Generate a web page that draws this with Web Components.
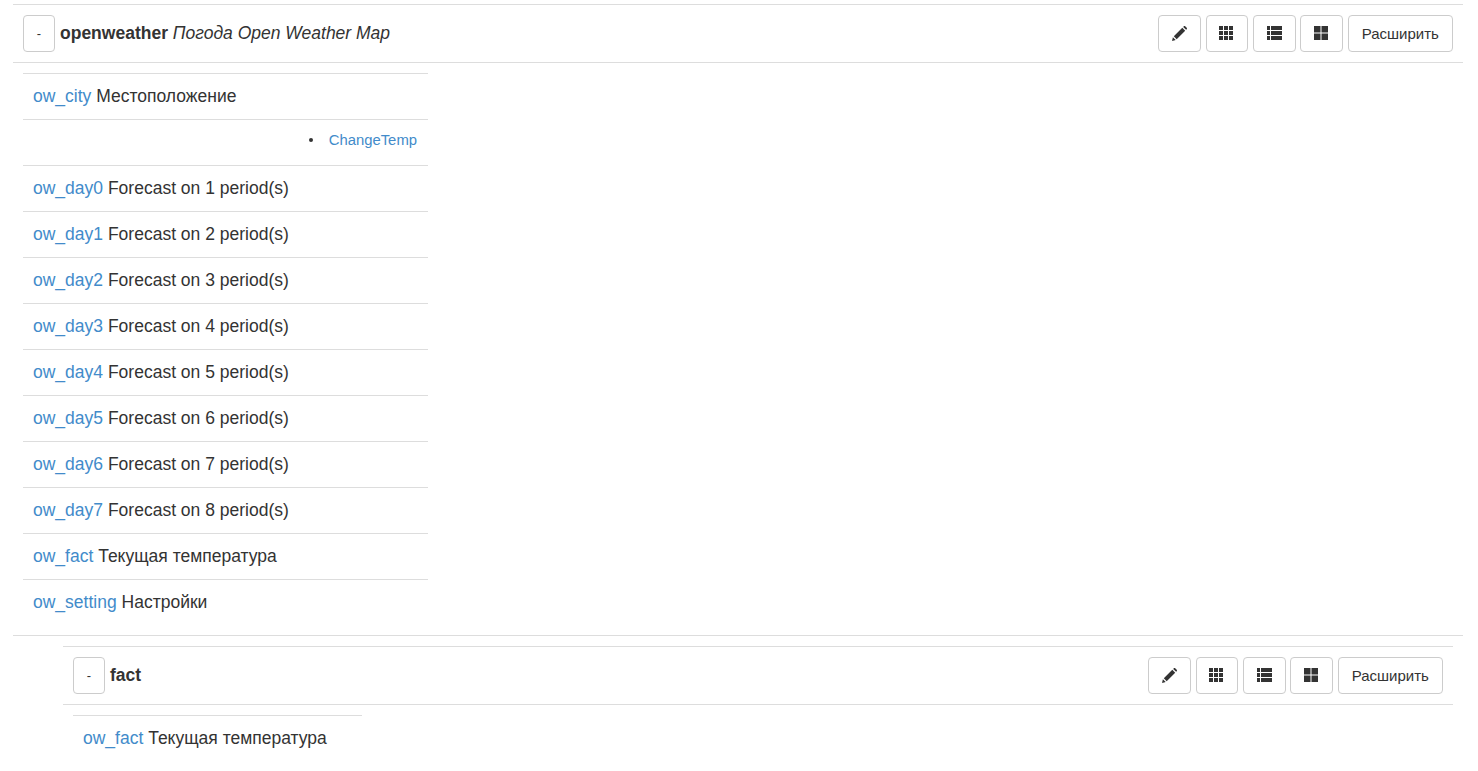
<!DOCTYPE html>
<html><head><meta charset="utf-8"><style>
html,body{margin:0;padding:0;background:#fff}
body{font-family:"Liberation Sans",Arial,sans-serif;font-size:17.5px;line-height:23px;color:#333;padding:4px 15px 0 13px}
</style></head><body>
<template id="tb"><style>
:host{display:inline-flex;align-items:center;justify-content:center;box-sizing:border-box;height:37px;border:1px solid #ccc;border-radius:4px;background:#fff;color:#333;font-size:15px;line-height:20px;flex:none}
</style><slot></slot></template>
<template id="hd"><style>
:host{display:flex;align-items:center;height:57px;border-top:1px solid #ddd;border-bottom:1px solid #ddd;padding:0 10px}
.t{margin-left:5px;font-size:17.5px;line-height:20px;white-space:nowrap;position:relative;top:-1px;flex:1}
.a{display:flex;gap:4.6px;padding-left:.4px}
b{font-weight:700}i{font-style:italic}
svg{display:block;fill:#333;margin:0 2px 1px 0}
svg.n{margin-right:0}
</style><x-btn style="width:32px;font-size:13px">-</x-btn>
<div class="t"><b id="n"></b> <i id="d"></i></div>
<div class="a">
<x-btn style="width:42.7px"><svg class="n" width="15" height="15" viewBox="0 0 15 15"><path d="M0 15 .9 11.300 3.700 14.100ZM1.800 10.300 10.300 1.800 13.200 4.700 4.700 13.200ZM11.200 .9 11.800.3C12.200-.1 12.800-.1 13.200.3L14.700 1.800C15.100 2.200 15.100 2.800 14.700 3.200L14.100 3.800Z"/></svg></x-btn>
<x-btn style="width:42.7px"><svg width="14" height="14" viewBox="0 0 14 14"><path d="M0 0h4v4H0ZM5 0h4v4H5ZM10 0h4v4h-4ZM0 5h4v4H0ZM5 5h4v4H5ZM10 5h4v4h-4ZM0 10h4v4H0ZM5 10h4v4H5ZM10 10h4v4h-4Z"/></svg></x-btn>
<x-btn style="width:42.7px"><svg class="n" width="15" height="14" viewBox="0 0 15 14"><path d="M0 0h3v4H0ZM4 0h11v4H4ZM0 5h3v4H0ZM4 5h11v4H4ZM0 10h3v4H0ZM4 10h11v4H4Z"/></svg></x-btn>
<x-btn style="width:42.7px"><svg width="14" height="14" viewBox="0 0 14 14"><path d="M0 0h6.500v6.500H0ZM7.500 0H14v6.500H7.500ZM0 7.500h6.500V14H0ZM7.500 7.500H14V14H7.500Z"/></svg></x-btn>
<x-btn style="width:105.400px">Расширить</x-btn>
</div></template>
<template id="rw"><style>
:host{display:block;border-top:1px solid #ddd;padding:11px 10px;height:23px;white-space:nowrap}
</style><slot></slot></template>
<template id="lk"><style>
:host{color:#428bca}
</style><slot></slot></template>
<template id="sub"><style>
:host{display:flex;justify-content:flex-end;align-items:center;border-top:1px solid #ddd;padding:8px 11px 14px 10px;height:23px;font-size:14.85px;color:#428bca;line-height:20px}
i{display:block;width:4px;height:4px;border-radius:50%;background:#333;margin-right:16px}
</style><i></i><slot></slot></template>
<template id="tbl"><style>
:host{display:block;margin:10px 0 10px 10px}
</style><slot></slot></template>
<template id="rl"><style>
:host{display:block;height:1px;background:#ddd}
</style></template>
<template id="blk"><style>
:host{display:block}
</style><slot></slot></template>

<ow-block>
<ow-header name="openweather" desc="Погода Open Weather Map"></ow-header>
<ow-table style="width:405px">
<ow-row><ow-link>ow_city</ow-link> Местоположение</ow-row>
<ow-sub>ChangeTemp</ow-sub>
<ow-row><ow-link>ow_day0</ow-link> Forecast on 1 period(s)</ow-row>
<ow-row><ow-link>ow_day1</ow-link> Forecast on 2 period(s)</ow-row>
<ow-row><ow-link>ow_day2</ow-link> Forecast on 3 period(s)</ow-row>
<ow-row><ow-link>ow_day3</ow-link> Forecast on 4 period(s)</ow-row>
<ow-row><ow-link>ow_day4</ow-link> Forecast on 5 period(s)</ow-row>
<ow-row><ow-link>ow_day5</ow-link> Forecast on 6 period(s)</ow-row>
<ow-row><ow-link>ow_day6</ow-link> Forecast on 7 period(s)</ow-row>
<ow-row><ow-link>ow_day7</ow-link> Forecast on 8 period(s)</ow-row>
<ow-row><ow-link>ow_fact</ow-link> Текущая температура</ow-row>
<ow-row><ow-link>ow_setting</ow-link> Настройки</ow-row>
</ow-table>
<ow-rule></ow-rule>
<ow-block style="margin:10px 10px 0 50px">
<ow-header name="fact"></ow-header>
<ow-table style="width:289px">
<ow-row><ow-link>ow_fact</ow-link> Текущая температура</ow-row>
</ow-table>
</ow-block>
</ow-block>
<script>
const simple=(tag,id)=>customElements.define(tag,class extends HTMLElement{constructor(){super();this.attachShadow({mode:'open'}).appendChild(document.getElementById(id).content.cloneNode(true))}});
simple('x-btn','tb');simple('ow-row','rw');simple('ow-link','lk');simple('ow-sub','sub');simple('ow-table','tbl');simple('ow-rule','rl');simple('ow-block','blk');
customElements.define('ow-header',class extends HTMLElement{constructor(){super();const s=this.attachShadow({mode:'open'});s.appendChild(document.getElementById('hd').content.cloneNode(true));s.getElementById('n').textContent=this.getAttribute('name')||'';s.getElementById('d').textContent=this.getAttribute('desc')||''}});
</script>
</body></html>
